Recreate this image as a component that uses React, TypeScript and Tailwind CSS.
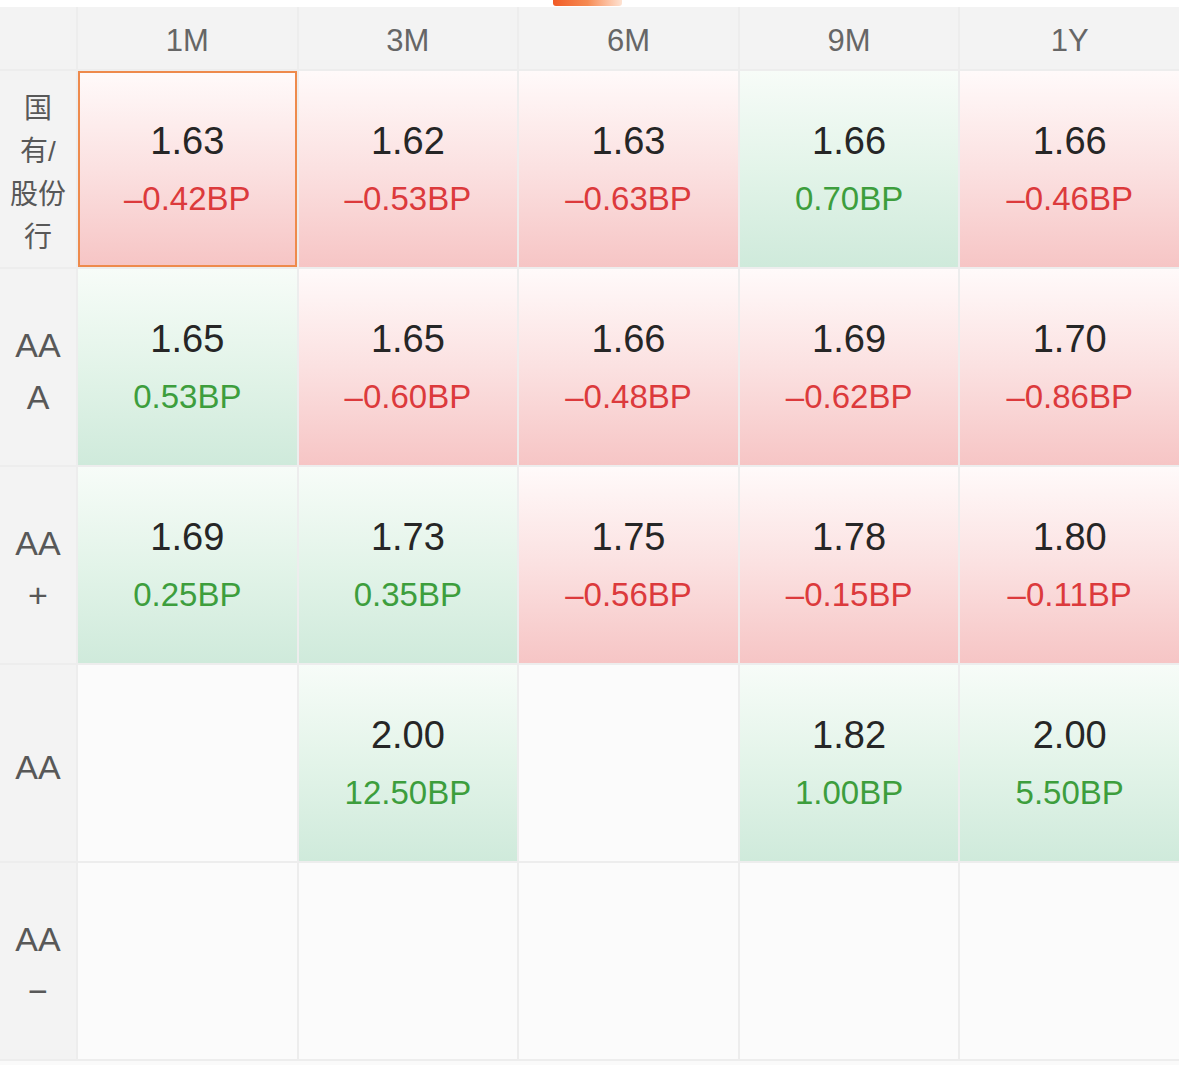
import React from "react";

type Cell = { value: string; bp: string } | null;

const tenors = ["1M", "3M", "6M", "9M", "1Y"];

const rows: { label: string[]; cjk?: boolean; cells: Cell[] }[] = [
  {
    label: ["国", "有/", "股份", "行"],
    cjk: true,
    cells: [
      { value: "1.63", bp: "-0.42" },
      { value: "1.62", bp: "-0.53" },
      { value: "1.63", bp: "-0.63" },
      { value: "1.66", bp: "0.70" },
      { value: "1.66", bp: "-0.46" },
    ],
  },
  {
    label: ["AA", "A"],
    cells: [
      { value: "1.65", bp: "0.53" },
      { value: "1.65", bp: "-0.60" },
      { value: "1.66", bp: "-0.48" },
      { value: "1.69", bp: "-0.62" },
      { value: "1.70", bp: "-0.86" },
    ],
  },
  {
    label: ["AA", "+"],
    cells: [
      { value: "1.69", bp: "0.25" },
      { value: "1.73", bp: "0.35" },
      { value: "1.75", bp: "-0.56" },
      { value: "1.78", bp: "-0.15" },
      { value: "1.80", bp: "-0.11" },
    ],
  },
  {
    label: ["AA"],
    cells: [
      null,
      { value: "2.00", bp: "12.50" },
      null,
      { value: "1.82", bp: "1.00" },
      { value: "2.00", bp: "5.50" },
    ],
  },
  {
    label: ["AA", "−"],
    cells: [null, null, null, null, null],
  },
];

function QuoteCell({ cell, selected }: { cell: Cell; selected?: boolean }) {
  if (!cell) return <div className="bg-[#fbfbfb]" />;
  const down = cell.bp.startsWith("-");
  return (
    <div
      className={
        "flex flex-col items-center justify-center " +
        (down
          ? "bg-gradient-to-b from-[#fffafa] via-[#fbe1e1] to-[#f6c5c5]"
          : "bg-gradient-to-b from-[#f7fcf8] via-[#e3f4e9] to-[#cfeadb]") +
        (selected ? " border-2 border-[#ee8a4c]" : "")
      }
    >
      <div className="text-[38px] leading-[44px] text-[#262626]">{cell.value}</div>
      <div
        className={
          "mt-[16px] text-[33px] leading-[40px] " +
          (down ? "text-[#dc3a3c]" : "text-[#3d9e3d]")
        }
      >
        {down ? "–" + cell.bp.slice(1) : cell.bp}BP
      </div>
    </div>
  );
}

export default function App() {
  return (
    <div
      className="w-[1179px] h-[1065px] bg-[#fafafa] overflow-hidden"
      style={{ fontFamily: '"Liberation Sans", "Noto Sans CJK SC", sans-serif' }}
    >
      {/* tab indicator strip */}
      <div className="h-[7px] bg-white flex">
        <div className="ml-[553px] w-[69px] h-[6px] rounded-b-[3px] bg-gradient-to-r from-[#f15a24] via-[#f58a52] to-[#fde3d3]" />
      </div>

      <div className="grid grid-cols-[76px_repeat(5,1fr)] grid-rows-[62px_repeat(5,196px)] gap-[2px] bg-[#ededed] pb-[2px]">
        <div className="bg-[#f3f3f3]" />
        {tenors.map((t) => (
          <div
            key={t}
            className="bg-[#f3f3f3] flex items-center justify-center pt-[6px] text-[31px] text-[#666666]"
          >
            {t}
          </div>
        ))}

        {rows.map((row, ri) => (
          <React.Fragment key={ri}>
            <div
              className={
                "bg-[#f3f3f3] flex flex-col items-center justify-center pt-[7px] text-[#585858] " +
                (row.cjk ? "text-[28px] leading-[43px]" : "text-[34px] leading-[52px]")
              }
            >
              {row.label.map((l, i) => (
                <div key={i}>{l}</div>
              ))}
            </div>
            {row.cells.map((c, ci) => (
              <QuoteCell key={ci} cell={c} selected={ri === 0 && ci === 0} />
            ))}
          </React.Fragment>
        ))}
      </div>
    </div>
  );
}
